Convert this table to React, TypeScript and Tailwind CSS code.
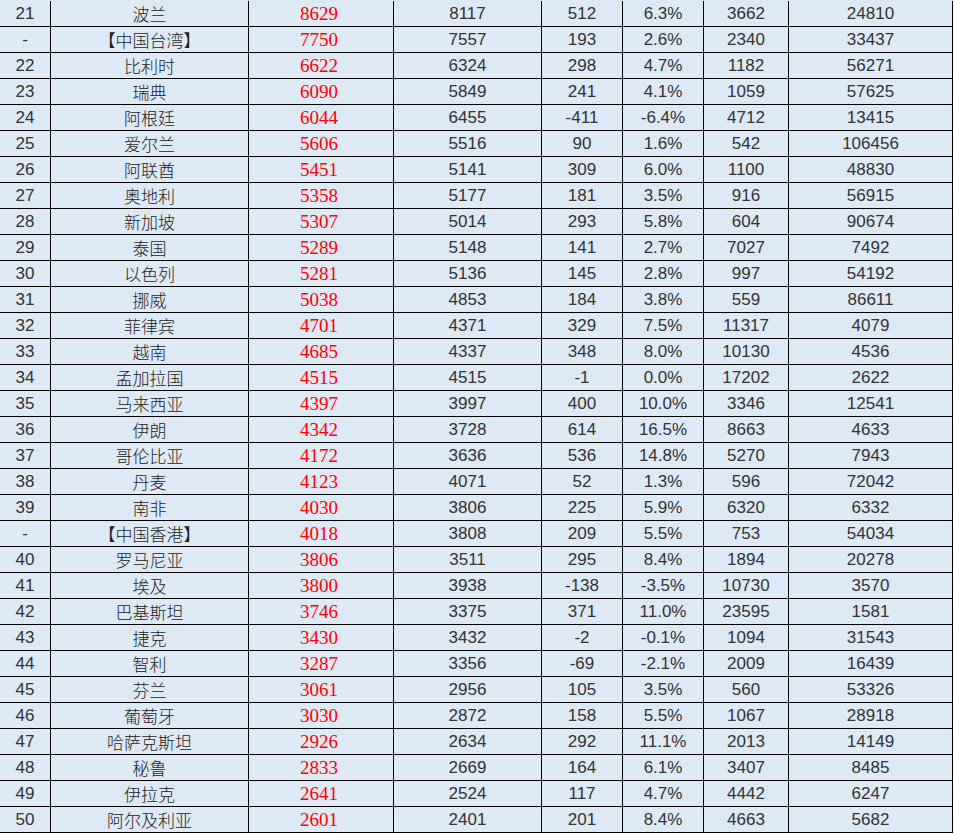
import React from 'react';

type Row = [string, string, string, string, string, string, string, string];

const rows: Row[] = [
  ['21', '波兰', '8629', '8117', '512', '6.3%', '3662', '24810'],
  ['-', '【中国台湾】', '7750', '7557', '193', '2.6%', '2340', '33437'],
  ['22', '比利时', '6622', '6324', '298', '4.7%', '1182', '56271'],
  ['23', '瑞典', '6090', '5849', '241', '4.1%', '1059', '57625'],
  ['24', '阿根廷', '6044', '6455', '-411', '-6.4%', '4712', '13415'],
  ['25', '爱尔兰', '5606', '5516', '90', '1.6%', '542', '106456'],
  ['26', '阿联酋', '5451', '5141', '309', '6.0%', '1100', '48830'],
  ['27', '奥地利', '5358', '5177', '181', '3.5%', '916', '56915'],
  ['28', '新加坡', '5307', '5014', '293', '5.8%', '604', '90674'],
  ['29', '泰国', '5289', '5148', '141', '2.7%', '7027', '7492'],
  ['30', '以色列', '5281', '5136', '145', '2.8%', '997', '54192'],
  ['31', '挪威', '5038', '4853', '184', '3.8%', '559', '86611'],
  ['32', '菲律宾', '4701', '4371', '329', '7.5%', '11317', '4079'],
  ['33', '越南', '4685', '4337', '348', '8.0%', '10130', '4536'],
  ['34', '孟加拉国', '4515', '4515', '-1', '0.0%', '17202', '2622'],
  ['35', '马来西亚', '4397', '3997', '400', '10.0%', '3346', '12541'],
  ['36', '伊朗', '4342', '3728', '614', '16.5%', '8663', '4633'],
  ['37', '哥伦比亚', '4172', '3636', '536', '14.8%', '5270', '7943'],
  ['38', '丹麦', '4123', '4071', '52', '1.3%', '596', '72042'],
  ['39', '南非', '4030', '3806', '225', '5.9%', '6320', '6332'],
  ['-', '【中国香港】', '4018', '3808', '209', '5.5%', '753', '54034'],
  ['40', '罗马尼亚', '3806', '3511', '295', '8.4%', '1894', '20278'],
  ['41', '埃及', '3800', '3938', '-138', '-3.5%', '10730', '3570'],
  ['42', '巴基斯坦', '3746', '3375', '371', '11.0%', '23595', '1581'],
  ['43', '捷克', '3430', '3432', '-2', '-0.1%', '1094', '31543'],
  ['44', '智利', '3287', '3356', '-69', '-2.1%', '2009', '16439'],
  ['45', '芬兰', '3061', '2956', '105', '3.5%', '560', '53326'],
  ['46', '葡萄牙', '3030', '2872', '158', '5.5%', '1067', '28918'],
  ['47', '哈萨克斯坦', '2926', '2634', '292', '11.1%', '2013', '14149'],
  ['48', '秘鲁', '2833', '2669', '164', '6.1%', '3407', '8485'],
  ['49', '伊拉克', '2641', '2524', '117', '4.7%', '4442', '6247'],
  ['50', '阿尔及利亚', '2601', '2401', '201', '8.4%', '4663', '5682'],
];

const cell = 'flex items-center justify-center border-r border-black h-full leading-none';

export default function App() {
  return (
    <div className="w-[954px] h-[834px] bg-white">
      <div className="w-[953px] pt-px bg-[#dde9f5] font-['Liberation_Sans','Noto_Sans_CJK_SC',sans-serif] text-[17px] text-[#333]">
        {rows.map((r, i) => (
          <div
            key={i}
            className="grid grid-cols-[51px_198px_145px_148px_81px_81px_85px_164px] h-[26px] border-b border-black"
          >
            <div className={cell}>{r[0]}</div>
            <div className={`${cell} font-['Noto_Sans_CJK_SC',sans-serif] font-light text-[17px] text-[#222]`}>{r[1]}</div>
            <div className={`${cell} font-['Liberation_Serif',serif] text-[19px] text-[#ff0000] pr-1`}>{r[2]}</div>
            <div className={cell}>{r[3]}</div>
            <div className={cell}>{r[4]}</div>
            <div className={cell}>{r[5]}</div>
            <div className={cell}>{r[6]}</div>
            <div className={cell}>{r[7]}</div>
          </div>
        ))}
      </div>
    </div>
  );
}
